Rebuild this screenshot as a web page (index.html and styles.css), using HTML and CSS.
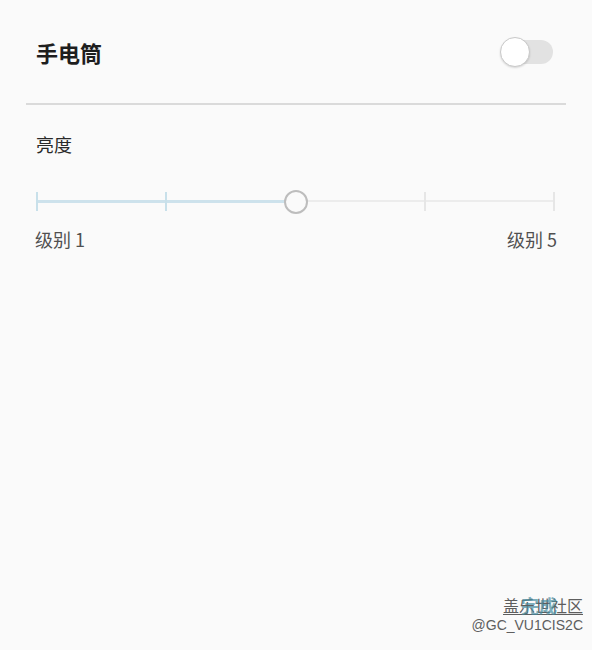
FILE: index.html
```html
<!DOCTYPE html>
<html lang="zh">
<head>
<meta charset="utf-8">
<link rel="stylesheet" href="styles.css">
</head>
<body>
<div class="screen">
  <div class="row-switch">
    <span class="title">手电筒</span>
    <div class="switch"><span class="knob"></span></div>
  </div>
  <div class="divider"></div>
  <div class="brightness">
    <div class="label">亮度</div>
    <div class="slider">
      <div class="track"></div>
      <div class="fill" style="width: 50%"></div>
      <span class="tick on" style="left: 0%"></span>
      <span class="tick on" style="left: 25%"></span>
      <span class="tick" style="left: 75%"></span>
      <span class="tick" style="left: 100%"></span>
      <span class="thumb" style="left: 50%"></span>
    </div>
    <div class="ends"><span>级别 1</span><span>级别 5</span></div>
  </div>
  <div class="mark">
    <span class="mark-name">盖乐世社区</span>
    <span class="mark-done">完成</span>
    <span class="mark-id">@GC_VU1CIS2C</span>
  </div>
</div>
</body>
</html>
```

FILE: styles.css
```css
html, body {
  margin: 0;
  padding: 0;
  background: #fafafa;
}
body {
  font-family: "Noto Sans CJK SC", "Noto Sans", Roboto, sans-serif;
  color: #222;
}
.screen {
  width: 592px;
  height: 650px;
  position: relative;
  overflow: hidden;
}
.row-switch {
  display: flex;
  align-items: center;
  justify-content: space-between;
  height: 104px;
  padding: 0 39px 0 36px;
  box-sizing: border-box;
}
.title {
  font-size: 22px;
  font-weight: 700;
  color: #1e1e1e;
  margin-top: 0;
}
.switch {
  position: relative;
  width: 53px;
  height: 30px;
}
.switch::before {
  content: "";
  position: absolute;
  left: 8px;
  right: 0;
  top: 3px;
  height: 24px;
  border-radius: 12px;
  background: #e2e2e2;
}
.knob {
  position: absolute;
  left: 0;
  top: 0;
  width: 28px;
  height: 28px;
  border-radius: 50%;
  background: #fff;
  border: 1px solid #c9c9c9;
  box-shadow: 0 1px 2px rgba(0,0,0,0.15);
}
.divider {
  height: 2px;
  margin: -1px 26px 0 26px;
  background: #dadada;
}
.brightness {
  padding: 0 36px 0 36px;
}
.label {
  font-size: 18px;
  color: #2a2a2a;
  margin-top: 27px;
  line-height: 24px;
}
.slider {
  position: relative;
  height: 20px;
  margin: 35px 2px 0 1px;
}
.track {
  position: absolute;
  left: 0;
  right: 0;
  top: 9px;
  height: 2px;
  background: #ececec;
}
.fill {
  position: absolute;
  left: 0;
  top: 9px;
  height: 3px;
  background: #cde2ec;
}
.tick {
  position: absolute;
  top: 1px;
  width: 2px;
  height: 19px;
  margin-left: -1px;
  background: #e6e6e6;
}
.tick.on {
  background: #c8e0ea;
}
.thumb {
  position: absolute;
  top: -1px;
  width: 20px;
  height: 20px;
  margin-left: -12px;
  border-radius: 50%;
  border: 2px solid #bdbdbd;
  background: #fafafa;
}
.ends {
  display: flex;
  justify-content: space-between;
  font-size: 18px;
  color: #505050;
  margin: 16px -1px 0 -1px;
  line-height: 24px;
}
.mark {
  position: absolute;
  right: 9px;
  bottom: 15px;
  display: flex;
  flex-direction: column;
  align-items: flex-end;
  color: #5e5e5e;
  font-family: "Noto Sans CJK SC", sans-serif;
}
.mark-name {
  font-size: 16px;
  line-height: 20px;
  text-decoration: underline;
  text-underline-offset: 2px;
}
.mark-done {
  position: absolute;
  right: 26px;
  top: 0;
  font-size: 18px;
  line-height: 20px;
  font-weight: 700;
  color: rgba(70, 140, 160, 0.7);
}
.mark-id {
  font-family: "Liberation Sans", sans-serif;
  font-size: 14px;
  line-height: 20px;
  letter-spacing: 0;
}
```
